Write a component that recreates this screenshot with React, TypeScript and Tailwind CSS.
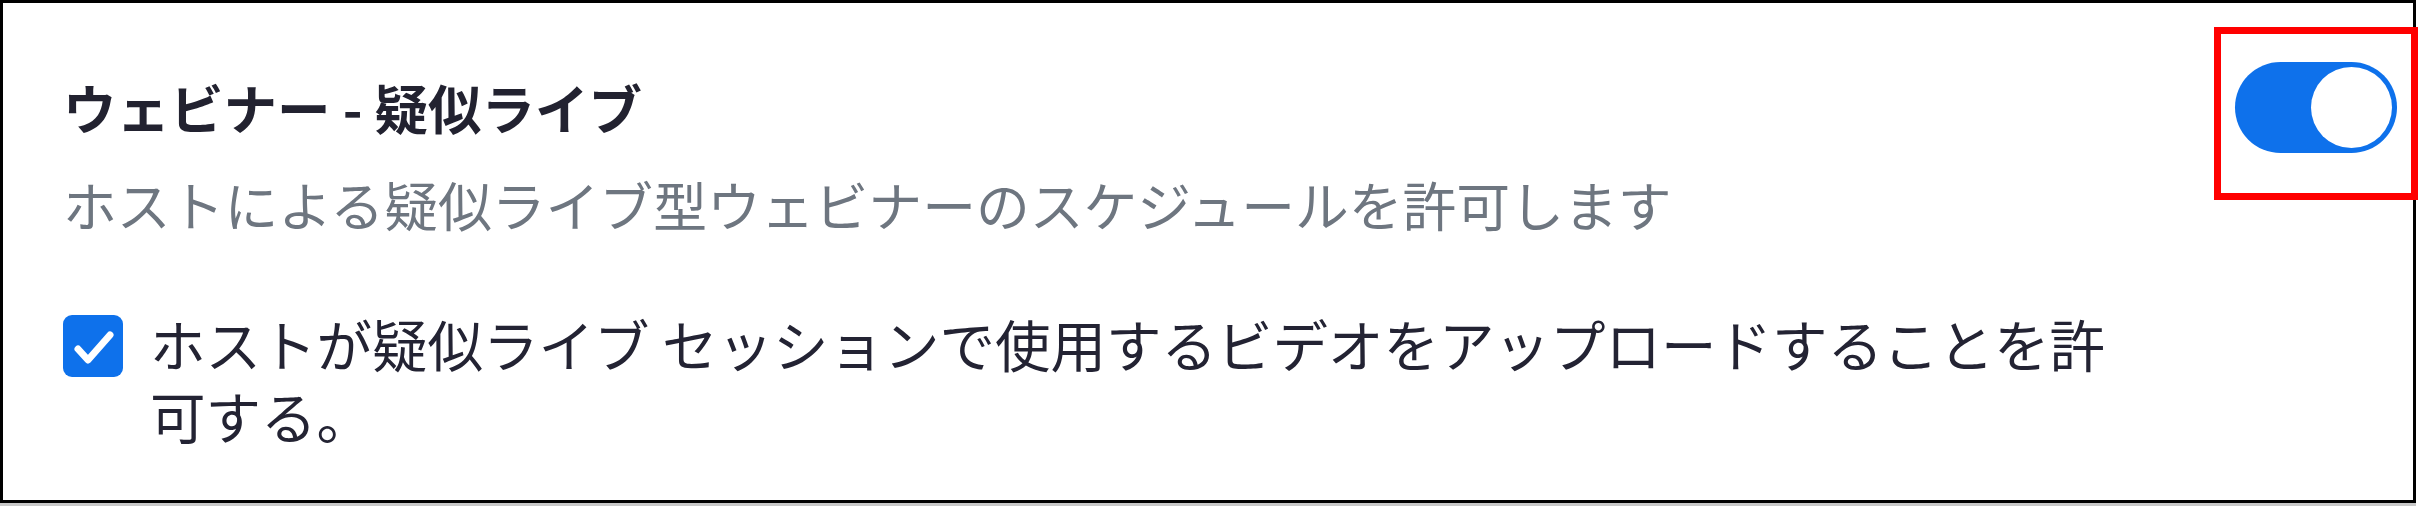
import React from "react";

const FONT = "font-['Noto_Sans_CJK_JP',sans-serif]";

export default function App() {
  return (
    <div className={`relative w-[2418px] h-[506px] bg-white ${FONT}`}>
      <div className="w-[2416px] h-[503px] border-[3px] border-black flex justify-between pl-[60px] pr-[16px]">
        <div className="flex flex-col pt-[68px]">
          <div className="text-[53.5px] leading-[72px] font-bold text-[#222230]">
            ウェビナー - 疑似ライブ
          </div>
          <div className="mt-[25px] text-[53.8px] leading-[72px] text-[#6e7680]">
            ホストによる疑似ライブ型ウェビナーのスケジュールを許可します
          </div>
          <div className="mt-[67px] flex items-start gap-[27px]">
            <div className="mt-[8px] w-[60px] h-[62px] rounded-[9px] bg-[#0e71eb] flex items-center justify-center shrink-0">
              <svg width="60" height="62" viewBox="0 0 60 62">
                <polyline
                  points="15,34 25,45 47,20"
                  fill="none"
                  stroke="white"
                  strokeWidth="7"
                  strokeLinecap="round"
                  strokeLinejoin="round"
                />
              </svg>
            </div>
            <div className="w-[1990px] text-[55.5px] leading-[72px] text-[#232333]">
              ホストが疑似ライブ セッションで使用するビデオをアップロードすることを許可する。
            </div>
          </div>
        </div>
        <div className="pt-[59px]">
          <div className="w-[162px] h-[91px] rounded-full bg-[#0e71eb] flex items-center justify-end pr-[5px]">
            <div className="w-[81px] h-[81px] rounded-full bg-white" />
          </div>
        </div>
      </div>
      <div className="h-[3px] w-[2416px] bg-[#c8c8c8]" />
      <div className="absolute left-[2214px] top-[27px] w-[204px] h-[173px] border-[7px] border-[#ff0000]" />
    </div>
  );
}
